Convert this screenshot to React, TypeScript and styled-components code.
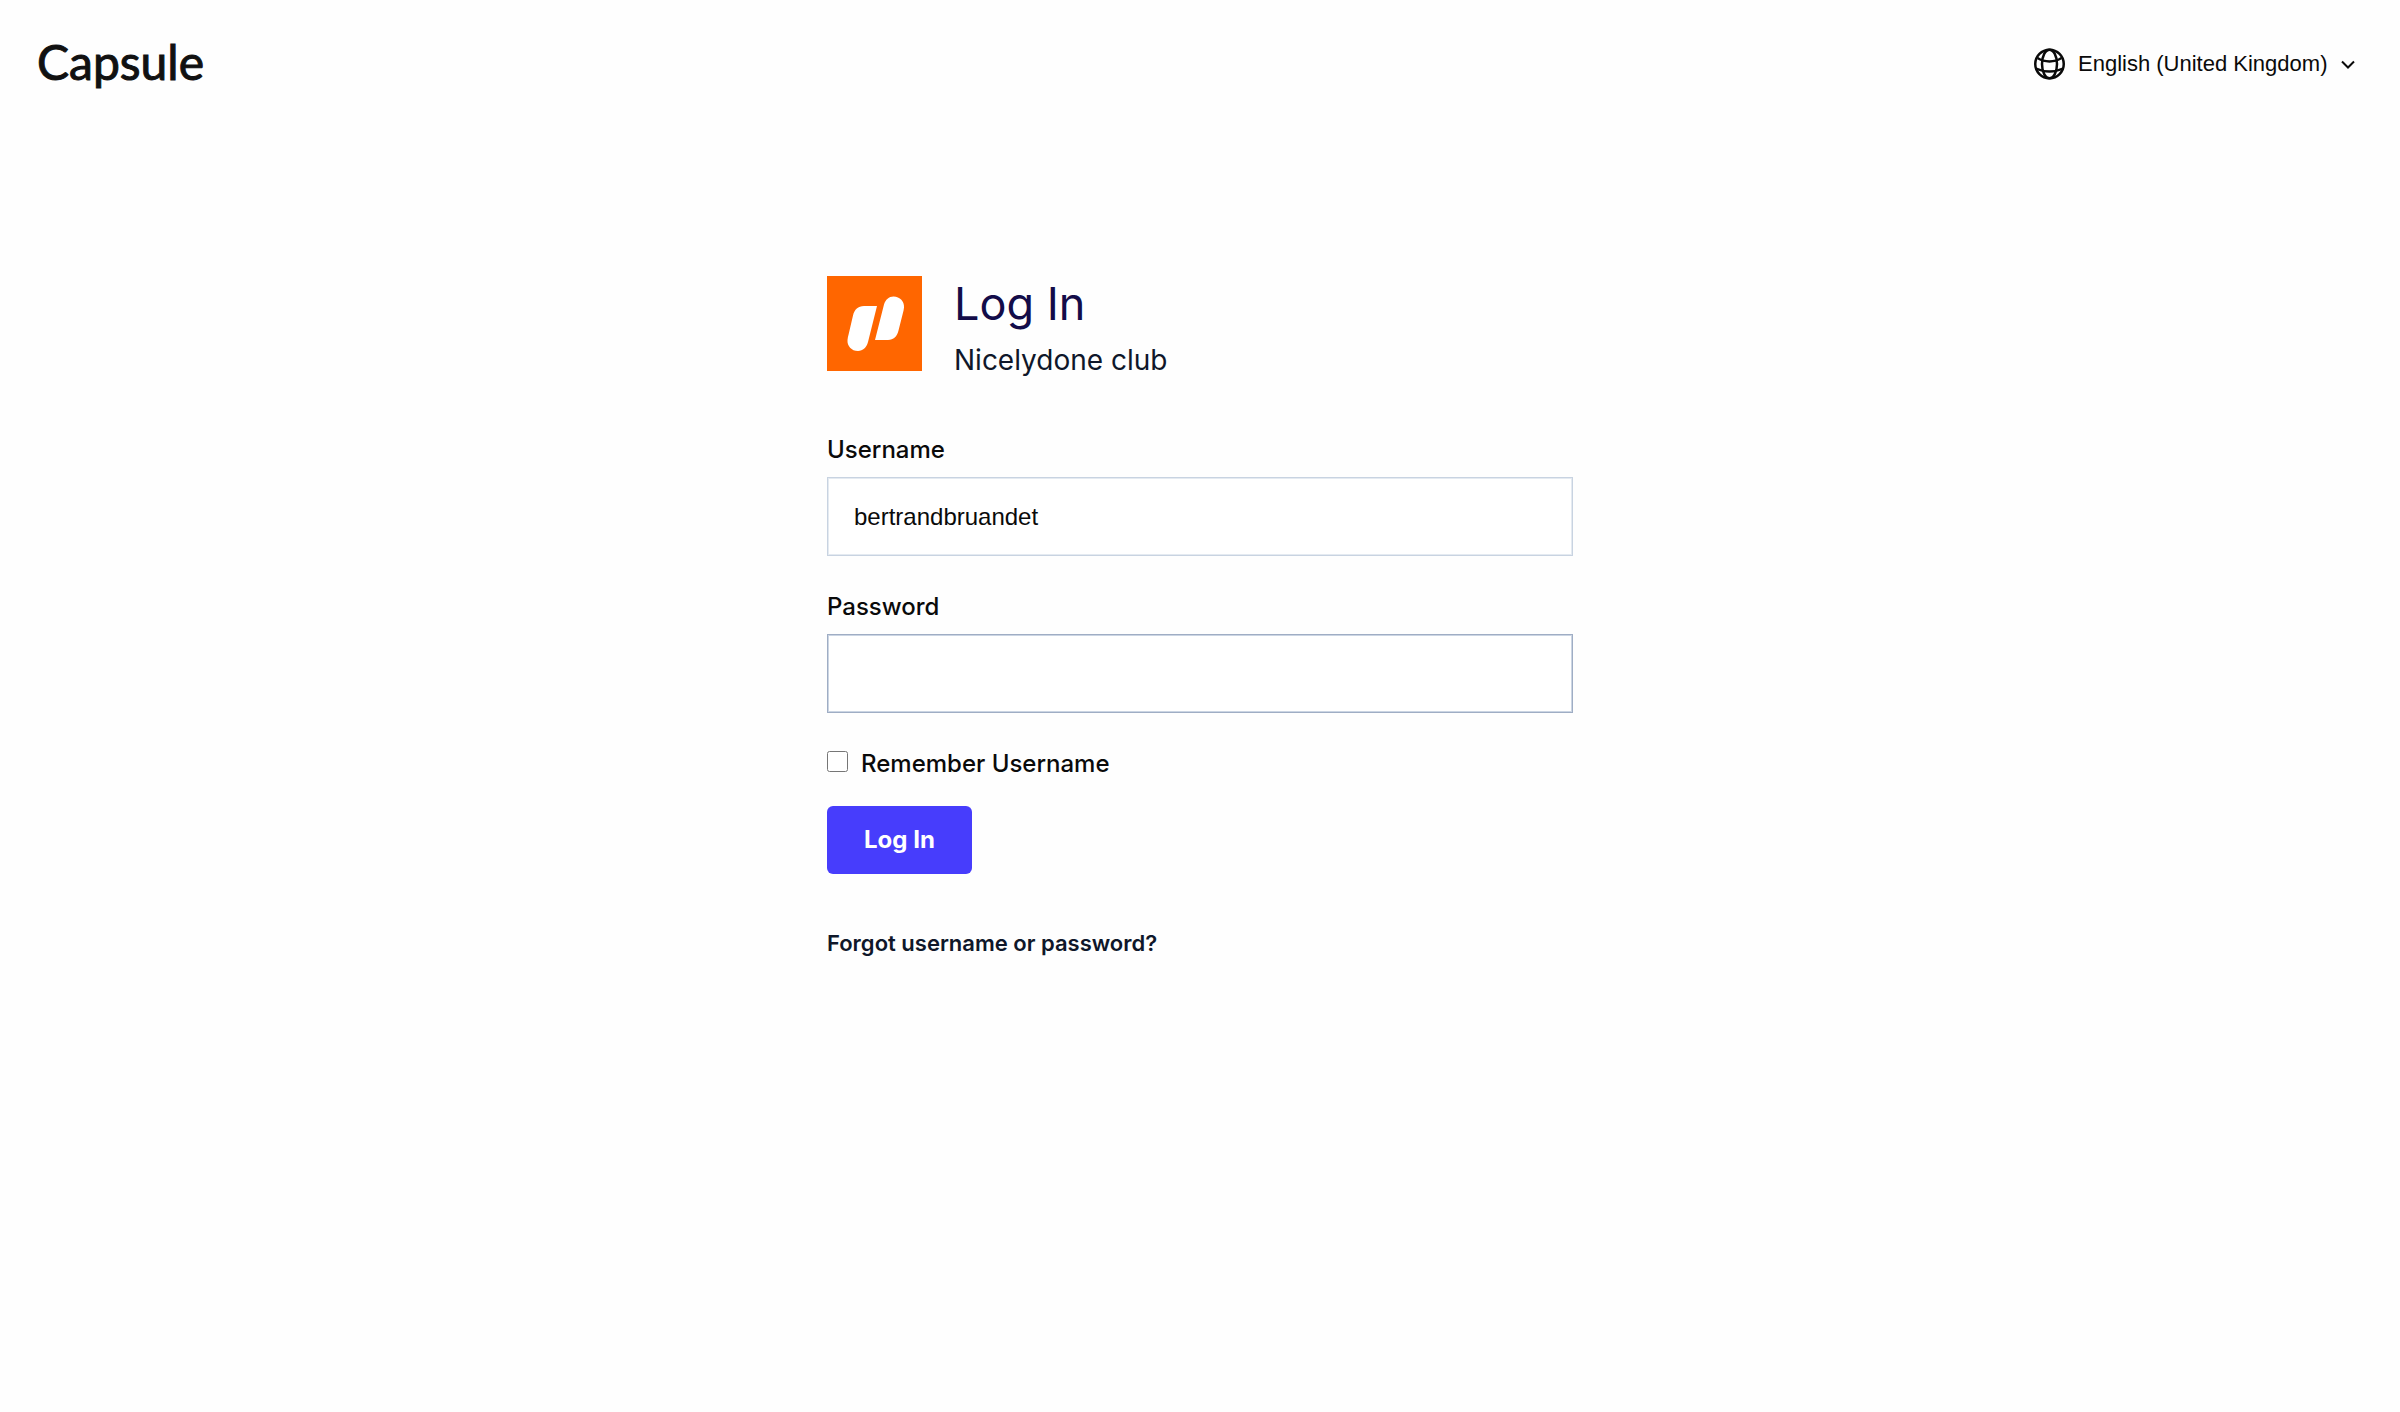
import React, { useState } from "react";
import styled, { createGlobalStyle } from "styled-components";

const GlobalStyle = createGlobalStyle`
  *, *::before, *::after { box-sizing: border-box; }
  body {
    margin: 0;
    background: #fefefe;
    color: #0a0a0a;
    font-family: Inter, "Noto Sans", sans-serif;
    font-size: 24px;
    line-height: 32px;
  }
`;

const Page = styled.div`
  min-height: 100vh;
`;

const TopBar = styled.header`
  display: flex;
  align-items: center;
  justify-content: space-between;
  padding: 30px 40px 34px 37px;
`;

const Wordmark = styled.a`
  color: #111;
  font-family: Lato, sans-serif;
  font-size: 48px;
  font-weight: 400;
  line-height: 64px;
  text-decoration: none;
  -webkit-text-stroke: 1px #111;
`;

const LanguagePicker = styled.label`
  display: flex;
  align-items: center;
  gap: 12px;
  padding-top: 3px;
`;

const LanguageSelect = styled.select`
  appearance: none;
  border: 0;
  padding: 0;
  background: transparent;
  color: #0a0a0a;
  font-family: "Liberation Sans", Arial, sans-serif;
  font-size: 22px;
  line-height: 32px;
  cursor: pointer;
`;

const Chevron = styled.svg`
  margin-left: -4px;
`;

const Main = styled.main`
  width: 100%;
  max-width: 778px;
  margin: 0 auto;
  padding: 148px 16px 64px;
`;

const Brand = styled.div`
  display: flex;
  gap: 32px;
  margin-bottom: 54px;
`;

const Title = styled.h1`
  margin: 0;
  color: #130c49;
  font-size: 45px;
  font-weight: 400;
  line-height: 56px;
`;

const Account = styled.p`
  margin: 8px 0 0;
  color: #0f172a;
  font-size: 28px;
  line-height: 40px;
`;

const Form = styled.form`
  display: flex;
  flex-direction: column;
  align-items: flex-start;
`;

const Field = styled.div`
  display: flex;
  flex-direction: column;
  gap: 11px;
  width: 100%;
  margin-bottom: 35px;
`;

const Label = styled.label`
  font-weight: 500;
`;

const TextInput = styled.input<{ $strong?: boolean }>`
  width: 100%;
  height: 79px;
  padding: 0 26px;
  border: 1px solid ${(p) => (p.$strong ? "#9fadc4" : "#c8d3e1")};
  border-radius: 0;
  box-shadow: inset 0 0 0 1px ${(p) => (p.$strong ? "#cbd5e3" : "#e4eaf1")};
  background: #fff;
  color: #0a0a0a;
  font-family: "Liberation Sans", Arial, sans-serif;
  font-size: 24px;
  outline: none;
`;

const Remember = styled.div`
  display: flex;
  align-items: flex-start;
  gap: 13px;
  margin-bottom: 26px;
`;

const Checkbox = styled.input`
  width: 21px;
  height: 21px;
  margin: 3px 0 0;
`;

const SubmitButton = styled.button`
  padding: 18px 37px;
  border: 0;
  border-radius: 6px;
  background: #473dfc;
  color: #fff;
  font-family: inherit;
  font-size: 24px;
  font-weight: 700;
  line-height: 32px;
  cursor: pointer;
`;

const ForgotLink = styled.a`
  margin-top: 53px;
  color: #0f172a;
  font-size: 22px;
  font-weight: 600;
  text-decoration: none;
`;

const GlobeIcon = () => (
  <svg width="32" height="32" viewBox="0 0 32 32" fill="none" stroke="#0a0a0a" strokeWidth="2.5" aria-hidden="true">
    <circle cx="15.500" cy="16" r="14.250" />
    <ellipse cx="15.500" cy="16" rx="7.500" ry="14.250" />
    <path d="M3.500 10c7 4.500 17 4.500 24 0M2 20.500c8 4 19 4 27 0" />
  </svg>
);

const ChevronIcon = () => (
  <Chevron width="24" height="24" viewBox="0 0 24 24" fill="none" stroke="#0a0a0a" strokeWidth="2" aria-hidden="true">
    <path d="M6 9.500l6 6 6-6" />
  </Chevron>
);

const AccountLogo = () => (
  <svg width="95" height="95" viewBox="0 0 95 95" aria-hidden="true">
    <rect width="95" height="95" fill="#ff6600" />
    <path
      fill="#fff"
      d="M37 30H50L41 66C39.500 71.500 36 75 31 75C24.500 75 20 70 20.500 64C20.600 62 21.200 60 21.700 58L26 39.500C27.500 33.500 31 30 37 30Z"
    />
    <path
      fill="#fff"
      d="M48 64L57 28.500C58.500 23.500 62 20.500 66.500 20.500C73 20.500 77.500 25.500 77 31.500C76.900 33.500 76.300 35.500 75.800 37.500L71.500 54.500C70 60.500 66.500 64 61 64Z"
    />
  </svg>
);

export default function App() {
  const [username, setUsername] = useState("bertrandbruandet");
  const [password, setPassword] = useState("");

  return (
    <Page>
      <GlobalStyle />
      <TopBar>
        <Wordmark href="#">Capsule</Wordmark>
        <LanguagePicker>
          <GlobeIcon />
          <LanguageSelect aria-label="Language">
            <option>English (United Kingdom)</option>
          </LanguageSelect>
          <ChevronIcon />
        </LanguagePicker>
      </TopBar>
      <Main>
        <Brand>
          <AccountLogo />
          <div>
            <Title>Log In</Title>
            <Account>Nicelydone club</Account>
          </div>
        </Brand>
        <Form onSubmit={(e) => e.preventDefault()}>
          <Field>
            <Label htmlFor="username">Username</Label>
            <TextInput id="username" value={username} onChange={(e) => setUsername(e.target.value)} />
          </Field>
          <Field>
            <Label htmlFor="password">Password</Label>
            <TextInput
              id="password"
              type="password"
              $strong
              value={password}
              onChange={(e) => setPassword(e.target.value)}
            />
          </Field>
          <Remember>
            <Checkbox id="remember" type="checkbox" />
            <Label htmlFor="remember">Remember Username</Label>
          </Remember>
          <SubmitButton type="submit">Log In</SubmitButton>
          <ForgotLink href="#">Forgot username or password?</ForgotLink>
        </Form>
      </Main>
    </Page>
  );
}
